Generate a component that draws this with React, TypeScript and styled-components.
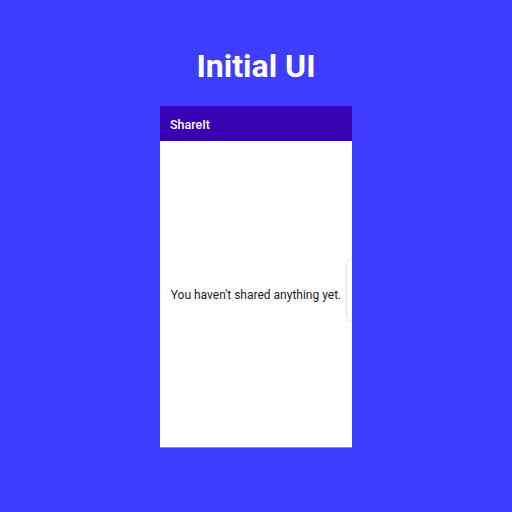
import React from "react";
import styled, { createGlobalStyle } from "styled-components";

const GlobalStyle = createGlobalStyle`
  html, body {
    margin: 0;
    padding: 0;
    background: #3f3dff;
  }
  body {
    font-family: Roboto, "Noto Sans", sans-serif;
  }
`;

const Page = styled.div`
  width: 512px;
  height: 512px;
  display: flex;
  flex-direction: column;
  align-items: center;
  box-sizing: border-box;
  padding-top: 46px;
  background: #3f3dff;
`;

const Title = styled.h1`
  margin: 0;
  font-size: 32px;
  line-height: 40px;
  font-weight: 700;
  color: #ffffff;
`;

const Phone = styled.div`
  margin-top: 20px;
  width: 192px;
  height: 342px;
  display: flex;
  flex-direction: column;
  background: #ffffff;
  box-sizing: border-box;
  border-bottom: 1px solid #8a8ac8;
  position: relative;
`;

const AppBar = styled.div`
  height: 35px;
  flex-shrink: 0;
  display: flex;
  align-items: center;
  padding-left: 10px;
  padding-top: 2px;
  box-sizing: border-box;
  background: #3700b3;
  color: #ffffff;
  font-size: 12.5px;
  font-weight: 500;
`;

const Body = styled.div`
  flex: 1;
  display: flex;
  align-items: center;
  justify-content: center;
  padding-top: 2px;
  font-size: 12px;
  color: #222222;
`;

const EdgeHandle = styled.div`
  position: absolute;
  right: 0;
  top: 152px;
  width: 6px;
  height: 64px;
  border: 1px solid #e6e6e6;
  border-right: none;
  border-radius: 6px 0 0 6px;
  box-sizing: border-box;
`;

export default function App() {
  return (
    <>
      <GlobalStyle />
      <Page>
        <Title>Initial UI</Title>
        <Phone>
          <AppBar>ShareIt</AppBar>
          <Body>You haven't shared anything yet.</Body>
          <EdgeHandle />
        </Phone>
      </Page>
    </>
  );
}
